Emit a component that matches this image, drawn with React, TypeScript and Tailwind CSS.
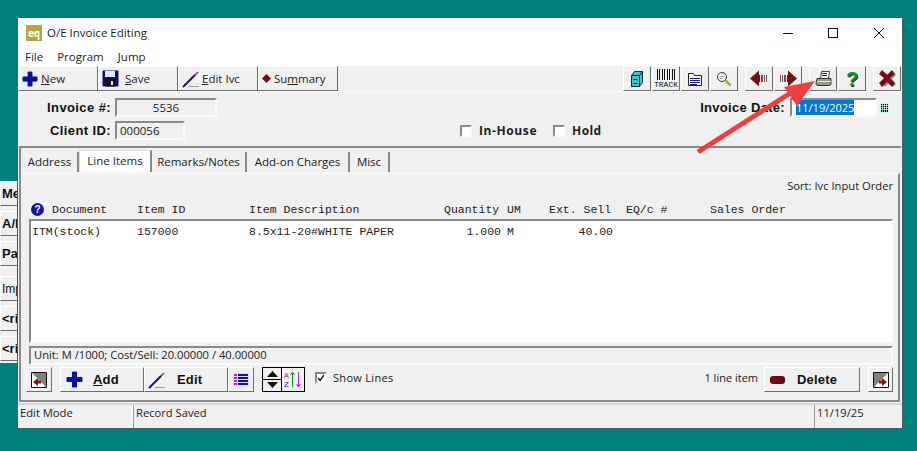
import React from "react";

const raised =
  "border border-t-white border-l-white border-r-[#6e6e6e] border-b-[#6e6e6e] bg-[#f0f0f0]";
const sunken =
  "border-2 border-t-[#8a8a8a] border-l-[#8a8a8a] border-r-[#fafafa] border-b-[#fafafa]";

const Plus = ({ size = 20 }: { size?: number }) => (
  <svg width={size} height={size} viewBox="0 0 20 20">
    <path d="M8 3h4v5h5v4h-5v5H8v-5H3V8h5z" fill="#8a8aa8" transform="translate(1 1)" />
    <path d="M7 1q3-1 6 0v6h6q1 3 0 6h-6v6q-3 1-6 0v-6H1Q0 10 1 7h6z" fill="#0b0fa0" />
  </svg>
);

const Pen = () => (
  <svg width="20" height="20" viewBox="0 0 20 20">
    <path d="M1 18L13 6" stroke="#1a1470" strokeWidth="2" />
    <path d="M13 6l3-3" stroke="#c02040" strokeWidth="1.5" />
    <path d="M7 17.5h10" stroke="#9a9a9a" strokeWidth="1" />
  </svg>
);

const Floppy = () => (
  <svg width="17" height="17" viewBox="0 0 17 17">
    <rect x="0.5" y="0.5" width="16" height="16" rx="1" fill="#0c0c78" />
    <rect x="3" y="1" width="10" height="6" fill="#e8e8f0" />
    <rect x="4" y="10" width="9" height="6.5" fill="#101018" />
    <rect x="9" y="11" width="2" height="4" fill="#e8e8f0" />
  </svg>
);

const TopButton = ({ icon, children, gap }: { icon: React.ReactNode; children: React.ReactNode; gap: string }) => (
  <div className={`${raised} w-[80px] h-[25px] flex items-center pl-[3px] ${gap} text-[11.5px] text-[#222]`}>
    {icon}
    <span>{children}</span>
  </div>
);

const IconButton = ({ children }: { children: React.ReactNode }) => (
  <div className={`${raised} w-[28px] h-[25px] flex items-center justify-center`}>{children}</div>
);

const Check = ({ on = false }: { on?: boolean }) => (
  <div className={`${sunken} w-[12px] h-[12px] bg-white flex items-center justify-center`}>
    {on && (
      <svg width="10" height="10" viewBox="0 0 10 10">
        <path d="M1.5 5l2.5 3 4.5-6.5" stroke="#111" strokeWidth="1.8" fill="none" />
      </svg>
    )}
  </div>
);

const Tab = ({ label, width, active = false }: { label: string; width: string; active?: boolean }) => (
  <div
    className={`${width} flex items-center justify-center text-[11.5px] text-[#222] border-r-2 border-r-[#8a8a8a] ${
      active ? "h-[22px] pb-[2px] bg-white border-t border-l border-t-[#ddd] border-l-[#ddd]" : "h-[20px] mt-[2px] bg-[#f0f0f0]"
    }`}
  >
    {label}
  </div>
);

const columns = [
  { label: "Document", width: "w-[85px]" },
  { label: "Item ID", width: "w-[112px]" },
  { label: "Item Description", width: "w-[195px]" },
  { label: "Quantity", width: "w-[63px]" },
  { label: "UM", width: "w-[42px]" },
  { label: "Ext. Sell", width: "w-[77px]" },
  { label: "EQ/c #", width: "w-[84px]" },
  { label: "Sales Order", width: "w-[90px]" },
];

const BackButtons = () => (
  <div className="absolute left-0 top-[181px] w-[18px] h-[182px] bg-[#f0f0f0] flex flex-col gap-[5px] font-['Liberation_Sans'] font-bold text-[13px] text-[#111] overflow-hidden">
    {["Me", "A/P", "Pa", "Imp", "<ri", "<ri"].map((t, i) => (
      <div
        key={i}
        className={`${raised} h-[25px] shrink-0 flex items-center whitespace-nowrap pl-[1px] ${
          i === 3 ? "mt-[5px] font-normal text-[12px]" : ""
        }`}
      >
        {t}
      </div>
    ))}
  </div>
);

export default function App() {
  return (
    <div className="relative w-[917px] h-[451px] bg-[#008080] overflow-hidden pl-[17px] pt-[17px] font-['Open_Sans',sans-serif]">
      <BackButtons />

      <div className="relative w-[886px] h-[412px] bg-[#f0f0f0] border border-[#4a5a5a] flex flex-col">
        {/* title bar */}
        <div className="h-[29px] bg-white flex items-center pl-[8px] shrink-0">
          <div className="w-[16px] h-[16px] bg-[#b5a642] text-white text-[10px] font-bold leading-[16px] text-center">eq</div>
          <span className="ml-[5px] text-[11.5px] text-[#222]">O/E Invoice Editing</span>
          <div className="ml-auto flex items-center">
            <svg width="12" height="12" viewBox="0 0 12 12" className="mr-[33px]"><path d="M1 6.5h10" stroke="#111" strokeWidth="1" /></svg>
            <svg width="12" height="12" viewBox="0 0 12 12" className="mr-[34px]"><rect x="1.5" y="1.5" width="9" height="9" fill="none" stroke="#111" /></svg>
            <svg width="12" height="12" viewBox="0 0 12 12" className="mr-[17px]"><path d="M1 1l10 10M11 1L1 11" stroke="#111" /></svg>
          </div>
        </div>

        {/* menu */}
        <div className="h-[19px] pt-[1px] bg-white flex items-center pl-[7px] gap-[14px] text-[11.5px] text-[#222] shrink-0">
          <span>File</span>
          <span>Program</span>
          <span>Jump</span>
        </div>

        {/* toolbar */}
        <div className="h-[26px] flex items-center shrink-0 border-b border-b-[#fafafa]">
          <TopButton icon={<Plus size={16} />} gap="gap-[3px]"><span className="underline">N</span>ew</TopButton>
          <TopButton icon={<Floppy />} gap="gap-[6px]"><span className="underline">S</span>ave</TopButton>
          <TopButton icon={<Pen />} gap="gap-0"><span className="underline">E</span>dit Ivc</TopButton>
          <TopButton
            icon={<svg width="9" height="9" viewBox="0 0 9 9"><path d="M4.5 0L9 4.5 4.5 9 0 4.5z" fill="#7a0a14" /></svg>}
            gap="gap-[3px]"
          >
            Su<span className="underline">m</span>mary
          </TopButton>

          <div className="ml-auto flex items-center mr-[1px]">
            <div className="flex mr-[7px] gap-[1px]">
              <IconButton>
                <svg width="14" height="18" viewBox="0 0 14 18">
                  <path d="M1.5 5.5l3-4h8v11l-3 4h-8z" fill="#3fc4c8" stroke="#0a2a40" />
                  <path d="M1.5 5.5h8v11M9.5 5.5l3-4M3.5 9.5h4M3.5 13.5h4" stroke="#0a2a40" fill="none" />
                </svg>
              </IconButton>
              <IconButton>
                <div className="flex flex-col items-center gap-[1px]">
                  <svg width="20" height="11" viewBox="0 0 20 11">
                    <path d="M1.5 0v11M3.5 0v11M6.5 0v11M8.5 0v11M11.5 0v11M13.5 0v11M16.5 0v11M18.5 0v11" stroke="#111" strokeWidth="1" />
                  </svg>
                  <span className="font-['Liberation_Mono'] text-[8px] leading-[7px] text-[#111]">TRACK</span>
                </div>
              </IconButton>
              <IconButton>
                <svg width="16" height="16" viewBox="0 0 16 16">
                  <path d="M1.5 2.5h5l1 2h7v10h-13z" fill="#fbfbf0" stroke="#222" />
                  <path d="M3 7.5h10M3 9.5h10M3 11.5h10M3 13.5h7" stroke="#1a1a90" />
                </svg>
              </IconButton>
              <IconButton>
                <svg width="16" height="16" viewBox="0 0 16 16">
                  <circle cx="6" cy="6" r="4.5" fill="#fafafa" stroke="#333" />
                  <path d="M3.5 5.5h4M3.5 7.5h3" stroke="#999" />
                  <path d="M9.5 9.5l5 5" stroke="#b0a830" strokeWidth="2.5" />
                </svg>
              </IconButton>
            </div>
            <div className="flex mr-[7px] gap-[1px]">
              <IconButton>
                <svg width="18" height="17" viewBox="0 0 18 17">
                  <path d="M0 8.5l9-8v4.500h1v7H9v4.500z" fill="#7a0a14" />
                  <path d="M11 5h2v7h-2zM14 5h1v7h-1zM16 5h1v7h-1z" fill="#7a4a50" />
                </svg>
              </IconButton>
              <IconButton>
                <svg width="18" height="17" viewBox="0 0 18 17">
                  <path d="M18 8.500l-9-8v4.500H8v7h1v4.500z" fill="#7a0a14" />
                  <path d="M5 5h2v7H5zM3 5h1v7H3zM1 5h1v7H1z" fill="#7a4a50" />
                </svg>
              </IconButton>
            </div>
            <div className="flex mr-[7px] gap-[1px]">
              <IconButton>
                <svg width="17" height="16" viewBox="0 0 17 16">
                  <path d="M6.500 0.500h8l-1 7h-8z" fill="#fafafa" stroke="#444" />
                  <path d="M7 2.500h5M7 4.500h5" stroke="#223" />
                  <path d="M2 7.500h14v5q0 2-2 2H3q-2 0-2-2z" fill="#9a9a8e" stroke="#333" />
                  <path d="M2 10.500h14" stroke="#e8e8e0" />
                  <rect x="3" y="11.500" width="2" height="1" fill="#20c040" />
                </svg>
              </IconButton>
              <IconButton>
                <span className="font-['Liberation_Sans'] font-bold text-[20px] leading-none text-[#0a9a20] [text-shadow:1px_1px_0_#333]">?</span>
              </IconButton>
            </div>
            <IconButton>
              <svg width="19" height="18" viewBox="0 0 19 18">
                <path d="M3 4l3-3 4 4 4-4 3 3-4 4 4 5-3 3-4-4-4 4-3-3 4-5z" fill="#999" transform="translate(1 1)" />
                <path d="M1 4l3-4 5 5 5-5 3 4-5 4 5 5-3 4-5-5-5 5-3-4 5-5z" fill="#7a0a14" />
              </svg>
            </IconButton>
          </div>
        </div>

        {/* form */}
        <div className="h-[54px] shrink-0 flex flex-col pt-[6px] gap-[4px] font-['Liberation_Sans'] text-[13px]">
          <div className="flex items-center h-[19px]">
            <span className="w-[93px] text-right font-bold tracking-[0.4px] text-[#111]">Invoice #:</span>
            <div className={`${sunken} ml-[4px] w-[102px] h-[19px] flex items-center justify-center font-['Open_Sans'] text-[11.5px] text-[#222]`}>5536</div>
            <span className="ml-auto font-bold tracking-[0.3px] text-[#111]">Invoice Date:</span>
            <div className={`${sunken} ml-[5px] w-[87px] h-[19px] bg-white flex items-center pl-[4px] font-['Open_Sans'] text-[11px]`}>
              <span className="bg-[#0078d7] text-white leading-[15px]">11/19/2025</span>
            </div>
            <svg width="9" height="10" viewBox="0 0 9 10" className="ml-[3px] mr-[13px]">
              <rect x="0" y="0" width="9" height="10" fill="#c8f4ec" />
              <rect x="1" y="1" width="7" height="8" fill="#111" />
              <path d="M2.500 1v8M4.500 1v8M6.500 1v8M1 2.500h7M1 4.500h7M1 6.500h7" stroke="#d8f0e8" strokeWidth="0.7" />
            </svg>
          </div>
          <div className="flex items-center h-[19px]">
            <span className="w-[93px] text-right font-bold tracking-[0.4px] text-[#111]">Client ID:</span>
            <div className={`${sunken} ml-[4px] w-[70px] h-[19px] flex items-center pl-[3px] font-['Open_Sans'] text-[11.5px] text-[#222]`}>000056</div>
            <div className="ml-[275px] flex items-center">
              <Check />
              <span className="ml-[7px] font-bold tracking-[0.6px] font-['Open_Sans'] text-[12px] text-[#222]">In-House</span>
            </div>
            <div className="ml-[16px] flex items-center">
              <Check />
              <span className="ml-[7px] font-bold tracking-[0.4px] font-['Open_Sans'] text-[12px] text-[#222]">Hold</span>
            </div>
          </div>
        </div>

        {/* tabbed box */}
        <div className="mx-[1px] h-[256px] shrink-0 flex flex-col border-t-2 border-l-2 border-t-[#8a8a8a] border-l-[#8a8a8a] pt-[2px]">
          <div className="h-[23px] flex shrink-0 pl-[1px]">
            <Tab label="Address" width="w-[57px]" />
            <Tab label="Line Items" width="w-[73px]" active />
            <Tab label="Remarks/Notes" width="w-[95px]" />
            <Tab label="Add-on Charges" width="w-[103px]" />
            <Tab label="Misc" width="w-[40px]" />
          </div>
          <div className="flex-1 flex flex-col border-t border-t-[#fafafa] border-r-2 border-b-2 border-r-[#8a8a8a] border-b-[#8a8a8a] mr-[1px] pl-[7px] pr-[5px]">
            <div className="h-[26px] flex items-end justify-end text-[11.2px] text-[#222] pb-[5px]">Sort: Ivc Input Order</div>
            <div className="h-[19px] flex items-center font-['Liberation_Mono'] text-[11.5px] text-[#222]">
              <div className="w-[24px] flex items-center pl-[3px]">
                <div className="w-[13px] h-[13px] rounded-full bg-[#1414a0] text-white text-[10px] font-bold leading-[13px] text-center font-['Liberation_Sans']">?</div>
              </div>
              {columns.map((c) => (
                <span key={c.label} className={`${c.width} whitespace-pre`}>{c.label}</span>
              ))}
            </div>
            <div className={`${sunken} ml-[1px] h-[124px] bg-white font-['Liberation_Mono'] text-[11.5px] text-[#222] pt-[3px] pl-[1px]`}>
              <div className="flex h-[16px] items-center whitespace-pre">
                <span className="w-[105px]">ITM(stock)</span>
                <span className="w-[112px]">157000</span>
                <span className="w-[190px]">8.5x11-20#WHITE PAPER</span>
                <span className="w-[62px] text-right">1.000</span>
                <span className="w-[41px] pl-[6px]">M</span>
                <span className="w-[71px] text-right">40.00</span>
              </div>
            </div>
            <div className={`${sunken} ml-[1px] mt-[3px] h-[19px] flex items-center pl-[3px] text-[11.2px] text-[#222]`}>Unit: M /1000; Cost/Sell: 20.00000 / 40.00000</div>
            <div className="flex items-start flex-1 pt-[2px] -ml-[2px]">
              <div className={`${raised} w-[26px] h-[25px] flex items-center justify-center mr-[8px]`}>
                <svg width="16" height="16" viewBox="0 0 16 16">
                  <path d="M0.500 0.500h15v15h-15z" fill="#fff" stroke="#111" />
                  <path d="M1 1h14v14z" fill="#808080" />
                  <path d="M2 10l5-4v2.500h3v3H7v2.500z" fill="#8a0a14" />
                </svg>
              </div>
              <div className={`${raised} w-[84px] h-[25px] flex items-center pl-[5px] font-['Liberation_Sans'] font-bold text-[13px] text-[#111] tracking-[0.2px]`}>
                <Plus size={17} />
                <span className="ml-[10px]"><span className="underline">A</span>dd</span>
              </div>
              <div className={`${raised} w-[84px] h-[25px] flex items-center pl-[3px] font-['Liberation_Sans'] font-bold text-[13px] text-[#111] tracking-[0.2px]`}>
                <Pen />
                <span className="ml-[9px]">Edit</span>
              </div>
              <div className={`${raised} w-[26px] h-[25px] flex items-center justify-center`}>
                <svg width="16" height="14" viewBox="0 0 16 14">
                  <rect width="16" height="14" fill="#e4d8f4" />
                  <path d="M1 2h3M1 5h3M1 8h3M1 11h3" stroke="#c020c0" strokeWidth="2" />
                  <path d="M5 2h10M5 5h10M5 8h10M5 11h10" stroke="#14148a" strokeWidth="2" />
                </svg>
              </div>
              <div className="ml-[8px] flex h-[25px] border border-black bg-[#f0f0f0]">
                <div className="w-[19px] flex flex-col items-center justify-center gap-[2px] border-r border-black">
                  <svg width="11" height="6" viewBox="0 0 11 6"><path d="M5.500 0L11 6H0z" fill="#111" /></svg>
                  <div className="w-full h-[1px] bg-black" />
                  <svg width="11" height="6" viewBox="0 0 11 6"><path d="M5.500 6L11 0H0z" fill="#111" /></svg>
                </div>
                <div className="w-[22px] flex items-center justify-center">
                  <svg width="19" height="19" viewBox="0 0 19 19">
                    <text x="0" y="8" fontSize="8" fill="#a020a0" fontFamily="Liberation Mono">A</text>
                    <text x="0" y="17" fontSize="8" fill="#1414a0" fontFamily="Liberation Mono">Z</text>
                    <path d="M8.500 17V3M6.500 5l2-3 2 3" stroke="#109030" fill="none" />
                    <path d="M14.500 2v14M12.500 14l2 3 2-3" stroke="#c020c0" fill="none" />
                  </svg>
                </div>
              </div>
              <div className="ml-[10px] mt-[5px]"><Check on /></div>
              <span className="ml-[6px] mt-[3px] text-[11px] text-[#222] tracking-[0.3px]">Show Lines</span>
              <span className="ml-auto mt-[3px] text-[11px] text-[#222]">1 line item</span>
              <div className={`${raised} ml-[6px] w-[96px] h-[25px] flex items-center pl-[5px] font-['Liberation_Sans'] font-bold text-[13px] text-[#111] tracking-[0.2px]`}>
                <svg width="16" height="8" viewBox="0 0 16 8"><rect width="15" height="8" rx="3" fill="#6e0a14" /></svg>
                <span className="ml-[11px]">Delete</span>
              </div>
              <div className={`${raised} ml-[8px] w-[25px] h-[25px] flex items-center justify-center`}>
                <svg width="16" height="16" viewBox="0 0 16 16">
                  <path d="M0.500 0.500h15v15h-15z" fill="#fff" stroke="#111" />
                  <path d="M1 1h14L1 15z" fill="#808080" />
                  <path d="M14 10l-5-4v2.500H6v3h3v2.500z" fill="#8a0a14" />
                </svg>
              </div>
            </div>
          </div>
        </div>

        {/* status bar */}
        <div className="flex-1 flex mt-[1px] border-t-2 border-t-[#d8d8d8] text-[11.2px] text-[#222]">
          <div className="w-[115px] flex items-start pl-[2px] border-r-2 border-r-[#fafafa]">Edit Mode</div>
          <div className="flex-1 flex items-start pl-[2px] border-l border-l-[#999]">Record Saved</div>
          <div className="w-[88px] flex items-start pl-[2px] border-l border-l-[#999]">11/19/25</div>
        </div>
      </div>

      {/* annotation arrow */}
      <svg className="absolute left-0 top-0 pointer-events-none" width="917" height="451" viewBox="0 0 917 451">
        <path d="M698 152L792 92" stroke="#ee3e3e" strokeWidth="5" />
        <path d="M815 81L784 87L797 106z" fill="#ee3e3e" />
      </svg>
    </div>
  );
}
